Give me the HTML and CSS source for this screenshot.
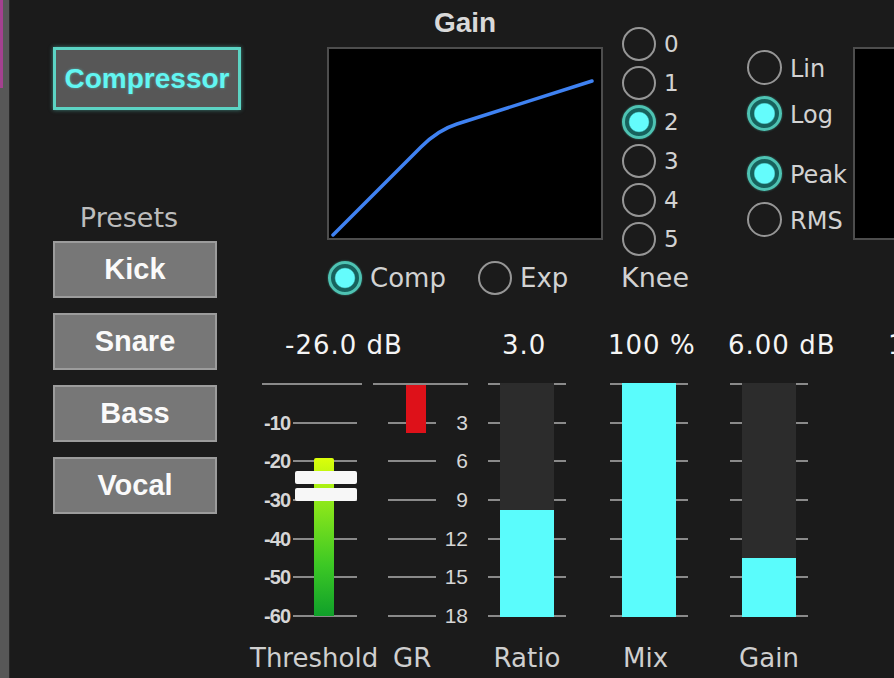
FILE: index.html
```html
<!DOCTYPE html>
<html>
<head>
<meta charset="utf-8">
<title>Compressor</title>
<link rel="stylesheet" href="styles.css">
</head>
<body>
<div class="app">
  <div class="strip"><div class="strip-accent"></div></div>

  <div class="left-col">
    <div class="btn-comp">Compressor</div>
    <div class="presets-label">Presets</div>
    <div class="presets">
      <div class="preset">Kick</div>
      <div class="preset">Snare</div>
      <div class="preset">Bass</div>
      <div class="preset">Vocal</div>
    </div>
  </div>

  <div class="right">
    <div class="top-row">
      <div class="gain-sec">
        <div class="gain-title">Gain</div>
        <div class="graph">
          <svg width="272" height="189" viewBox="0 0 272 189">
            <path d="M4 186 L92 98 Q109 81 128 75 L263 32" fill="none" stroke="#3f82f2" stroke-width="3.5" stroke-linecap="round" stroke-linejoin="round"/>
          </svg>
        </div>
        <div class="type-row">
          <div class="opt opt-comp"><span class="radio on"></span><span class="opt-label">Comp</span></div>
          <div class="opt"><span class="radio"></span><span class="opt-label">Exp</span></div>
        </div>
      </div>

      <div class="knee-col">
        <div class="knee-row"><span class="radio"></span><span class="knee-num">0</span></div>
        <div class="knee-row"><span class="radio"></span><span class="knee-num">1</span></div>
        <div class="knee-row"><span class="radio on"></span><span class="knee-num">2</span></div>
        <div class="knee-row"><span class="radio"></span><span class="knee-num">3</span></div>
        <div class="knee-row"><span class="radio"></span><span class="knee-num">4</span></div>
        <div class="knee-row"><span class="radio"></span><span class="knee-num">5</span></div>
        <div class="knee-label">Knee</div>
      </div>

      <div class="mode-col">
        <div class="mode-row"><span class="radio lg"></span><span class="mode-label">Lin</span></div>
        <div class="mode-row"><span class="radio lg on"></span><span class="mode-label">Log</span></div>
        <div class="mode-row sep"><span class="radio lg on"></span><span class="mode-label">Peak</span></div>
        <div class="mode-row"><span class="radio lg"></span><span class="mode-label">RMS</span></div>
      </div>

      <div class="scope"></div>
    </div>

    <div class="bottom-row">
      <div class="col col-thr">
        <div class="val val-thr">-26.0 dB</div>
        <div class="meter thr">
          <div class="scale">
            <div class="srow"><div class="topline"></div></div>
            <div class="srow"><span class="slabel">-10</span><div class="tline"></div></div>
            <div class="srow"><span class="slabel">-20</span><div class="tline"></div></div>
            <div class="srow"><span class="slabel">-30</span><div class="tline"></div></div>
            <div class="srow"><span class="slabel">-40</span><div class="tline"></div></div>
            <div class="srow"><span class="slabel">-50</span><div class="tline"></div></div>
            <div class="srow"><span class="slabel">-60</span><div class="tline"></div></div>
          </div>
          <div class="level"></div>
          <div class="handle h1"></div>
          <div class="handle h2"></div>
        </div>
        <div class="name name-thr">Threshold</div>
      </div>

      <div class="col col-gr">
        <div class="val"></div>
        <div class="meter gr">
          <div class="scale">
            <div class="srow"><div class="topline"></div></div>
            <div class="srow"><div class="tline"></div><span class="glabel">3</span></div>
            <div class="srow"><div class="tline"></div><span class="glabel">6</span></div>
            <div class="srow"><div class="tline"></div><span class="glabel">9</span></div>
            <div class="srow"><div class="tline"></div><span class="glabel">12</span></div>
            <div class="srow"><div class="tline"></div><span class="glabel">15</span></div>
            <div class="srow"><div class="tline"></div><span class="glabel">18</span></div>
          </div>
          <div class="gr-bar"></div>
        </div>
        <div class="name name-gr">GR</div>
      </div>

      <div class="col col-ratio">
        <div class="val val-ratio">3.0</div>
        <div class="meter">
          <div class="fader-ticks">
            <div class="frow"></div><div class="frow"></div><div class="frow"></div><div class="frow"></div>
            <div class="frow"></div><div class="frow"></div><div class="frow"></div>
          </div>
          <div class="track"><div class="fill" style="height:45.7%"></div></div>
        </div>
        <div class="name">Ratio</div>
      </div>

      <div class="col col-mix">
        <div class="val val-mix">100 %</div>
        <div class="meter">
          <div class="fader-ticks">
            <div class="frow"></div><div class="frow"></div><div class="frow"></div><div class="frow"></div>
            <div class="frow"></div><div class="frow"></div><div class="frow"></div>
          </div>
          <div class="track"><div class="fill" style="height:100%"></div></div>
        </div>
        <div class="name name-mix">Mix</div>
      </div>

      <div class="col col-gain">
        <div class="val val-gain">6.00 dB</div>
        <div class="meter">
          <div class="fader-ticks">
            <div class="frow"></div><div class="frow"></div><div class="frow"></div><div class="frow"></div>
            <div class="frow"></div><div class="frow"></div><div class="frow"></div>
          </div>
          <div class="track"><div class="fill" style="height:25.2%"></div></div>
        </div>
        <div class="name">Gain</div>
      </div>

      <div class="col col-extra">
        <div class="val">10 ms</div>
      </div>
    </div>
  </div>
</div>
</body>
</html>
```

FILE: styles.css
```css
html, body {
  margin: 0;
  padding: 0;
}
body {
  width: 894px;
  height: 678px;
  overflow: hidden;
  background: #1b1b1b;
  font-family: "DejaVu Sans", "Liberation Sans", sans-serif;
}
.app {
  display: flex;
  height: 678px;
}
.strip {
  flex: none;
  width: 9px;
  background: #575757;
  border-right: 1px solid #272727;
}
.strip-accent {
  width: 3px;
  height: 88px;
  background: #a4418f;
}

/* left column */
.left-col {
  flex: none;
  width: 188px;
  margin-left: 43px;
  display: flex;
  flex-direction: column;
  align-items: flex-start;
}
.btn-comp {
  margin-top: 47px;
  box-sizing: border-box;
  width: 188px;
  height: 63px;
  border: 3px solid #5cd4c4;
  background: #575757;
  color: #62f6f2;
  font: bold 28px "Liberation Sans", Arial, sans-serif;
  display: flex;
  align-items: center;
  justify-content: center;
  box-shadow: 0 0 4px rgba(92, 212, 196, 0.55);
  text-shadow: 0 0 3px rgba(98, 246, 242, 0.45);
}
.presets-label {
  margin-top: 93px;
  box-sizing: border-box;
  width: 164px;
  padding-right: 12px;
  height: 30px;
  line-height: 30px;
  text-align: center;
  color: #bdbdbd;
  font-size: 27px;
}
.presets {
  margin-top: 8px;
  display: flex;
  flex-direction: column;
  gap: 15px;
}
.preset {
  box-sizing: border-box;
  width: 164px;
  height: 57px;
  background: #777777;
  border: 2px solid #9c9c9c;
  color: #fafafa;
  font: bold 29px "Liberation Sans", Arial, sans-serif;
  display: flex;
  align-items: center;
  justify-content: center;
}

/* right area */
.right {
  flex: none;
  width: 653px;
  display: flex;
  flex-direction: column;
}
.top-row {
  height: 300px;
  display: flex;
  align-items: flex-start;
}
.gain-sec {
  flex: none;
  margin-left: 86px;
  width: 276px;
  display: flex;
  flex-direction: column;
}
.gain-title {
  height: 47px;
  font: bold 28px "Liberation Sans", Arial, sans-serif;
  line-height: 46px;
  text-align: center;
  color: #d9d9d9;
}
.graph {
  box-sizing: border-box;
  width: 276px;
  height: 193px;
  border: 2px solid #4d4d4d;
  background: #000;
}
.graph svg {
  display: block;
}
.type-row {
  margin-top: 21px;
  height: 34px;
  display: flex;
  align-items: center;
}
.opt {
  display: flex;
  align-items: center;
  gap: 8px;
}
.opt-comp {
  margin-left: 1px;
  width: 150px;
}
.opt-label {
  color: #d2d2d2;
  font-size: 26px;
}

.radio {
  flex: none;
  box-sizing: border-box;
  width: 34px;
  height: 34px;
  border-radius: 50%;
  border: 2px solid #969696;
}
.radio.lg {
  width: 35px;
  height: 35px;
}
.radio.on {
  border: 3px solid #4ec3b3;
  background: radial-gradient(circle closest-side, #64fcfc 0, #64fcfc 66%, #17625d 76%, #17625d 100%);
  box-shadow: 0 0 2px rgba(78, 195, 179, 0.6);
}

.knee-col {
  flex: none;
  margin-left: 19px;
  width: 70px;
  padding-top: 24px;
  display: flex;
  flex-direction: column;
}
.knee-row {
  height: 39px;
  display: flex;
  align-items: center;
  gap: 8px;
}
.knee-num {
  color: #d2d2d2;
  font-size: 23px;
}
.knee-label {
  margin-top: 5px;
  margin-left: -1px;
  height: 30px;
  line-height: 30px;
  color: #d2d2d2;
  font-size: 27px;
}

.mode-col {
  flex: none;
  margin-left: 55px;
  width: 100px;
  padding-top: 44px;
  display: flex;
  flex-direction: column;
}
.mode-row {
  height: 46px;
  display: flex;
  align-items: center;
  gap: 8px;
}
.mode-row.sep {
  margin-top: 14px;
}
.mode-label {
  color: #d2d2d2;
  font-size: 24px;
  padding-top: 4px;
}
.scope {
  flex: none;
  margin-left: 6px;
  margin-top: 47px;
  box-sizing: border-box;
  width: 100px;
  height: 193px;
  border: 2px solid #4d4d4d;
  background: #000;
}

/* bottom meters */
.bottom-row {
  display: flex;
  align-items: flex-start;
  margin-left: 7px;
  padding-top: 30px;
}
.col {
  flex: none;
  display: flex;
  flex-direction: column;
}
.col-thr { width: 124px; }
.col-gr { width: 104px; }
.col-ratio { width: 78px; margin-left: 12px; }
.col-mix { width: 78px; margin-left: 44px; }
.col-gain { width: 78px; margin-left: 42px; }
.col-extra { width: 80px; margin-left: 80px; }

.val {
  height: 30px;
  line-height: 30px;
  white-space: nowrap;
  color: #f4f4f4;
  font-size: 26px;
  letter-spacing: 1px;
}
.val-thr { padding-left: 37px; }
.val-ratio { padding-left: 14px; }
.val-mix, .val-gain { margin-left: -2px; }

.meter {
  flex: none;
  margin-top: 23px;
  height: 234px;
  position: relative;
  display: flex;
  flex-direction: column;
}
.name {
  margin-top: 26px;
  height: 30px;
  line-height: 30px;
  white-space: nowrap;
  color: #cfcfcf;
  font-size: 26px;
  text-align: center;
}
.name-thr { text-align: left; padding-left: 2px; }
.name-gr { text-align: left; padding-left: 21px; }
.name-mix { padding-right: 7px; }

.scale {
  flex: none;
  margin-top: -9px;
  height: 252px;
  display: flex;
  flex-direction: column;
  justify-content: space-between;
}
.srow {
  flex: none;
  height: 20px;
  display: flex;
  align-items: center;
}
.topline, .tline {
  flex: none;
  height: 2px;
  background: #8a8a8a;
}
.thr .topline { margin-left: 14px; width: 100px; }
.thr .tline { margin-left: 3px; width: 64px; }
.gr .topline { margin-left: 1px; width: 95px; }
.gr .tline { margin-left: 16px; width: 48px; }
.slabel {
  flex: none;
  width: 42px;
  text-align: right;
  font: bold 20px "Liberation Sans", Arial, sans-serif;
  line-height: 20px;
  letter-spacing: -1px;
  color: #d6d6d6;
}
.glabel {
  flex: none;
  width: 32px;
  text-align: right;
  font: 21px "Liberation Sans", Arial, sans-serif;
  line-height: 20px;
  color: #d6d6d6;
}
.level {
  position: absolute;
  left: 66px;
  top: 75px;
  width: 20px;
  height: 158px;
  background: linear-gradient(#dcff0a, #8ee81a 28%, #3cc825 68%, #10a02a);
  border-radius: 2px 2px 0 0;
}
.handle {
  position: absolute;
  left: 47px;
  width: 62px;
  height: 13px;
  background: #f7f7f7;
  border-radius: 2px;
}
.handle.h1 { top: 88px; }
.handle.h2 { top: 105px; }
.gr-bar {
  position: absolute;
  left: 34px;
  top: 2px;
  width: 20px;
  height: 48px;
  background: #de1119;
}

.fader-ticks {
  flex: none;
  margin-top: -9px;
  height: 252px;
  display: flex;
  flex-direction: column;
  justify-content: space-between;
}
.frow {
  flex: none;
  height: 20px;
  display: flex;
  align-items: center;
  justify-content: space-between;
}
.frow::before, .frow::after {
  content: "";
  width: 12px;
  height: 2px;
  background: #8a8a8a;
}
.track {
  position: absolute;
  left: 12px;
  top: 0;
  width: 54px;
  height: 234px;
  background: #2c2c2c;
}
.fill {
  position: absolute;
  left: 0;
  right: 0;
  bottom: 0;
  background: #5afcfc;
}
```
